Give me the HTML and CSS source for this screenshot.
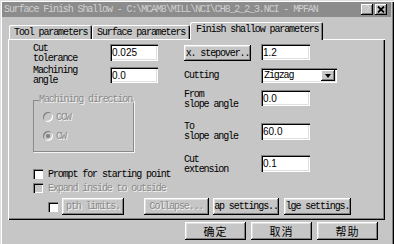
FILE: index.html
```html
<!DOCTYPE html>
<html lang="en">
  <head>
    <meta charset="utf-8">
    <link rel="stylesheet" href="styles.css">
  </head>
  <body>
    <div class="window">
      <div class="titlebar">
        <span class="title">Surface Finish Shallow - C:\MCAM8\MILL\NCI\CH8_2_2_3.NCI - MPFAN</span>
        <span class="tbtn">?</span>
        <span class="tbtn"><svg width="8" height="7" viewBox="0 0 8 7"><path d="M1 0.5 L7 6.5 M7 0.5 L1 6.5" stroke="#000" stroke-width="1.8"/></svg></span>
      </div>

      <div class="tabs">
        <div class="tab t1">Tool parameters</div>
        <div class="tab t2">Surface parameters</div>
        <div class="tab t3 active">Finish shallow parameters</div>
      </div>

      <div class="panel">
        <div class="cols">
          <div class="left">
            <div class="row r1">
              <div class="lbl">Cut<br>tolerance</div>
              <div class="edit">0.025</div>
            </div>
            <div class="row r2">
              <div class="lbl">Machining<br>angle</div>
              <div class="edit">0.0</div>
            </div>
            <fieldset class="group">
              <legend class="off">Machining direction</legend>
              <div class="radio"><span class="rb"></span><span class="off">CCW</span></div>
              <div class="radio r-cw"><span class="rb on"></span><span class="off">CW</span></div>
            </fieldset>
            <div class="check c1"><span class="cb"></span>Prompt for starting point</div>
            <div class="check c2"><span class="cb dis"></span><span class="off">Expand inside to outside</span></div>
          </div>

          <div class="right">
            <div class="row q1">
              <div class="btn stepover">x. stepover..</div>
              <div class="edit">1.2</div>
            </div>
            <div class="row q2">
              <div class="lbl">Cutting</div>
              <div class="select">
                <span>Zigzag</span>
                <span class="drop"><i class="tri"></i></span>
              </div>
            </div>
            <div class="row q3">
              <div class="lbl">From<br>slope angle</div>
              <div class="edit">0.0</div>
            </div>
            <div class="row q4">
              <div class="lbl">To<br>slope angle</div>
              <div class="edit">60.0</div>
            </div>
            <div class="row q5">
              <div class="lbl">Cut<br>extension</div>
              <div class="edit">0.1</div>
            </div>
          </div>
        </div>

        <div class="bottom">
          <span class="cb"></span>
          <div class="btn b-depth off">pth limits.</div>
          <div class="btn b-collapse off">Collapse...</div>
          <div class="btn b-gap">ap settings..</div>
          <div class="btn b-edge">lge settings.</div>
        </div>
      </div>

      <div class="actions">
        <div class="btn dlg">确定</div>
        <div class="btn dlg">取消</div>
        <div class="btn dlg">帮助</div>
      </div>
    </div>
  </body>
</html>
```

FILE: styles.css
```css
* {
  box-sizing: border-box;
}
body {
  margin: 0;
  overflow: hidden;
  background: #c6c6c6;
  font-family: "Liberation Mono", monospace;
  font-size: 10px;
  letter-spacing: -1.1px;
  color: #000;
}
.window {
  width: 394px;
  height: 250px;
  padding: 2px 3px 0 2px;
  box-shadow: inset 1px 1px #dfdfdf, inset 2px 2px #fff, inset -1px -1px #000, inset -2px -2px #808080;
}

/* title bar */
.titlebar {
  display: flex;
  align-items: center;
  height: 15px;
  padding: 0 4px 0 2px;
  background: #8c8c8c;
  color: #d0d0d0;
}
.title {
  flex: 1;
  white-space: nowrap;
  overflow: hidden;
}
.tbtn {
  display: flex;
  align-items: center;
  justify-content: center;
  width: 12px;
  height: 11px;
  margin-left: 2px;
  background: #c6c6c6;
  font: bold 10px "Liberation Sans", sans-serif;
  letter-spacing: 0;
  box-shadow: inset -1px -1px #000, inset 1px 1px #fff, inset -2px -2px #808080;
}

/* tabs */
.tabs {
  display: flex;
  align-items: flex-end;
  height: 17px;
  margin: 5px 0 0 7px;
}
.tab {
  height: 14px;
  padding: 2px 0 0 5px;
  line-height: 11px;
  white-space: nowrap;
  border-radius: 2px 2px 0 0;
  box-shadow: inset 1px 1px #fff, inset -1px 0 #000, inset -2px 0 #808080;
}
.t1 { width: 83px; }
.t2 { width: 98px; }
.t3 { width: 133px; }
.tab.active {
  position: relative;
  z-index: 1;
  height: 18px;
  margin-bottom: -1px;
  padding-left: 6px;
  background: #c6c6c6;
}

/* tab page */
.panel {
  height: 181px;
  margin: 0 6px;
  padding: 5px 0 0 25px;
  box-shadow: inset 1px 1px #fff, inset -1px -1px #000, inset -2px -2px #808080;
}
.cols {
  display: flex;
  height: 154px;
}
.left {
  width: 151px;
}
.row {
  display: flex;
  align-items: flex-start;
}
.lbl {
  width: 77px;
  line-height: 10px;
  white-space: nowrap;
}
.edit {
  width: 48px;
  height: 17px;
  padding: 3px 0 0 2px;
  background: #fff;
  font: 10px "Liberation Sans", sans-serif;
  line-height: 11px;
  letter-spacing: 0;
  box-shadow: inset 1px 1px #808080, inset 2px 2px #000, inset -1px -1px #fff, inset -2px -2px #dfdfdf;
}
.r1 { height: 17px; }
.r2 { height: 16px; margin-top: 6px; }
.r2 .lbl { margin-top: -1px; }
.r2 .edit { height: 16px; }

.off {
  color: #8a8a8a;
  text-shadow: 1px 1px #f4f4f4;
}

.group {
  width: 101px;
  height: 57px;
  margin: 12px 0 0;
  padding: 7px 0 0 9px;
  border: 1px solid #8a8a8a;
  box-shadow: 1px 1px #f4f4f4;
}
.group legend {
  margin-left: -4px;
  padding: 0;
  line-height: 10px;
}
.radio {
  display: flex;
  align-items: center;
  gap: 3px;
  height: 10px;
}
.r-cw {
  margin-top: 9px;
}
.rb {
  position: relative;
  width: 10px;
  height: 10px;
  border-radius: 50%;
  background: #c6c6c6;
  box-shadow: inset 1px 1px #808080, inset -1px -1px #fff;
}
.rb.on::after {
  content: "";
  position: absolute;
  left: 3px;
  top: 3px;
  width: 4px;
  height: 4px;
  border-radius: 50%;
  background: #808080;
}

.check {
  display: flex;
  align-items: center;
  gap: 5px;
  height: 10px;
  white-space: nowrap;
}
.c1 { margin-top: 17px; }
.c2 { margin-top: 4px; }
.cb {
  width: 10px;
  height: 10px;
  flex: none;
  background: #fff;
  box-shadow: inset 1px 1px #808080, inset 2px 2px #000, inset -1px -1px #fff;
}
.cb.dis {
  background: #c6c6c6;
}

/* right column */
.btn {
  display: flex;
  align-items: center;
  justify-content: center;
  height: 17px;
  white-space: nowrap;
  overflow: hidden;
  background: #c6c6c6;
  box-shadow: inset -1px -1px #000, inset 1px 1px #fff, inset -2px -2px #808080, inset 2px 2px #dfdfdf;
}
.stepover {
  width: 67px;
  height: 16px;
  margin: 1px 10px 0 0;
}
.q1 { height: 17px; }
.q1 .edit, .q3 .edit { width: 49px; height: 16px; }
.q2 {
  height: 15px;
  margin-top: 7px;
  align-items: center;
}
.select {
  display: flex;
  align-items: center;
  width: 76px;
  height: 15px;
  padding: 2px 2px 2px 3px;
  background: #fff;
  box-shadow: inset 1px 1px #808080, inset 2px 2px #000, inset -1px -1px #fff, inset -2px -2px #dfdfdf;
}
.drop {
  display: flex;
  align-items: center;
  justify-content: center;
  width: 14px;
  height: 11px;
  margin-left: auto;
  background: #c6c6c6;
  box-shadow: inset -1px -1px #000, inset 1px 1px #fff, inset -2px -2px #808080;
}
.tri {
  width: 0;
  height: 0;
  border-left: 3px solid transparent;
  border-right: 3px solid transparent;
  border-top: 4px solid #000;
}
.q3 { margin-top: 7px; }
.q4 { margin-top: 13px; }
.q4 .lbl { margin-top: -1px; }
.q5 { margin-top: 13px; }
.q4 .edit, .q5 .edit { width: 49px; }

/* button strip */
.bottom {
  display: flex;
  align-items: center;
  height: 17px;
  padding-left: 15px;
}
.b-depth { width: 62px; margin-left: 4px; }
.b-collapse { width: 65px; margin-left: 20px; }
.b-gap { width: 66px; margin-left: 4px; }
.b-edge { width: 67px; margin-left: 5px; }

/* dialog buttons */
.actions {
  display: flex;
  justify-content: flex-end;
  gap: 5px;
  margin: 2px 13px 0 0;
}
.dlg {
  width: 61px;
  height: 18px;
  font: 11px "Noto Sans CJK SC", sans-serif;
  letter-spacing: 1px;
}
```
